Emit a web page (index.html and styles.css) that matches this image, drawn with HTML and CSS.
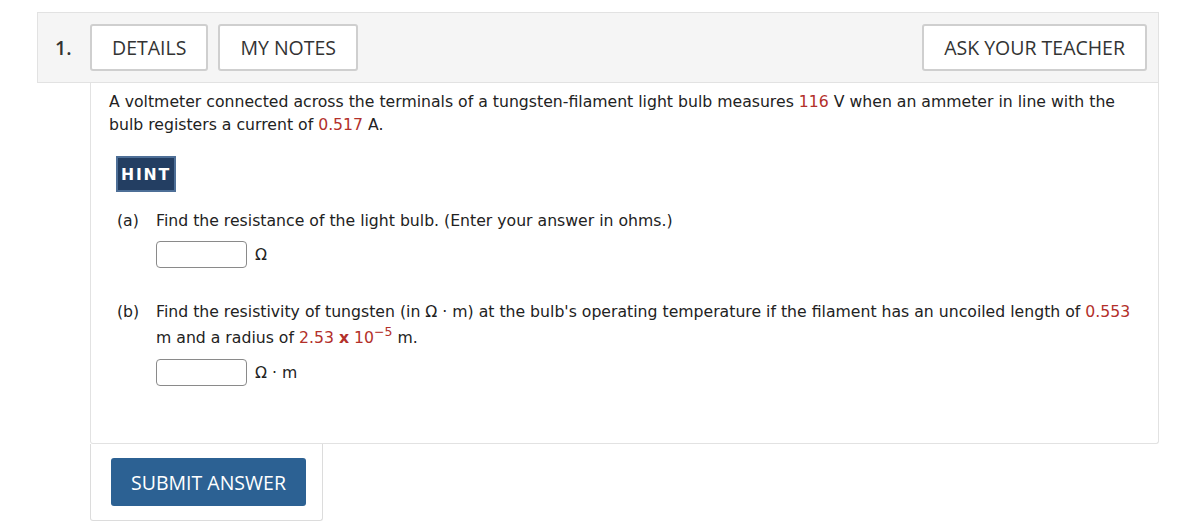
FILE: index.html
```html
<!DOCTYPE html>
<html>
<head>
<meta charset="utf-8">
<link rel="stylesheet" href="styles.css">
</head>
<body>
<div class="wrap">
  <div class="header">
    <span class="qnum">1.</span>
    <button class="hbtn">DETAILS</button>
    <button class="hbtn">MY NOTES</button>
    <span class="spacer"></span>
    <button class="hbtn">ASK YOUR TEACHER</button>
  </div>
  <div class="content">
    <p class="stem">A voltmeter connected across the terminals of a tungsten-filament light bulb measures <span class="red">116</span> V when an ammeter in line with the bulb registers a current of <span class="red">0.517</span> A.</p>
    <button class="hint">HINT</button>
    <div class="part part-a">
      <span class="plabel">(a)</span>
      <div class="pbody">
        <p class="ptext">Find the resistance of the light bulb. (Enter your answer in ohms.)</p>
        <div class="answer"><span class="inbox"></span><span class="unit">Ω</span></div>
      </div>
    </div>
    <div class="part part-b">
      <span class="plabel">(b)</span>
      <div class="pbody">
        <p class="ptext">Find the resistivity of tungsten (in Ω · m) at the bulb's operating temperature if the filament has an uncoiled length of <span class="red">0.553</span> m and a radius of <span class="red">2.53 <b class="times">x</b> 10<sup>−5</sup></span> m.</p>
        <div class="answer"><span class="inbox"></span><span class="unit">Ω · m</span></div>
      </div>
    </div>
  </div>
  <div class="submitbox">
    <button class="submit">SUBMIT ANSWER</button>
  </div>
</div>
</body>
</html>
```

FILE: styles.css
```css
html, body { margin: 0; padding: 0; background: #fff; }
.wrap { padding: 12px 20px 0 37px; }
.header {
  display: flex; align-items: center;
  background: #f5f5f5; border: 1px solid #e2e2e2;
  height: 71px; box-sizing: border-box;
  padding: 0 11px 0 17px;
  font-family: "Open Sans", sans-serif;
}
.qnum { font-size: 19.5px; font-weight: 600; color: #333; width: 35px; }
.hbtn {
  font-family: "Open Sans", sans-serif; font-size: 19.5px; color: #333;
  background: #fff; border: 2px solid #cfcfcf; border-radius: 3px;
  height: 47px; padding: 0 20px; margin-right: 10px;
}
.hbtn:last-child { margin-right: 0; }
.spacer { flex: 1; }
.content {
  margin-left: 53px; background: #fff;
  border: 1px solid #e2e2e2; border-top: 0; border-radius: 0 0 3px 3px;
  padding: 7px 20px 57px 18px;
  font-family: "DejaVu Sans", Verdana, sans-serif; font-size: 15.7px; color: #222;
}
.stem { margin: 0; line-height: 23px; }
.red { color: #b3302a; }
.hint {
  margin: 20px 0 0 7px; display: block;
  background: #233e62; border: 2px solid #4e6f97; color: #fff;
  font-family: "DejaVu Sans", Verdana, sans-serif; font-weight: bold; font-size: 15.7px;
  letter-spacing: 1.8px; width: 60px; height: 36px; padding: 0;
}
.part { display: flex; margin-left: 8px; }
.part-a { margin-top: 18px; }
.part-b { margin-top: 33px; }
.plabel { width: 39px; line-height: 22px; flex: none; }
.pbody { flex: 1; }
.ptext { margin: 0; line-height: 22px; }
.part-b .ptext { line-height: 26px; margin-top: -2px; }
.times { font-weight: bold; }
sup { font-size: 12.5px; line-height: 0; vertical-align: 7px; }
.answer { display: flex; align-items: center; margin-top: 9px; }
.part-b .answer { margin-top: 8px; }
.inbox {
  width: 91px; height: 27px; box-sizing: border-box;
  border: 1px solid #8a8a8a; border-radius: 4px; background: #fff;
}
.unit { margin-left: 8px; }
.submitbox {
  margin-left: 53px; width: 233px; box-sizing: border-box;
  border: 1px solid #dcdcdc; border-top: 0; border-radius: 0 0 3px 3px;
  padding: 14px 16px 14px 20px;
}
.submit {
  width: 195px; height: 48px; border: 0; border-radius: 3px;
  background: #2c6193; color: #fff;
  font-family: "Open Sans", sans-serif; font-size: 19.5px;
}
```
